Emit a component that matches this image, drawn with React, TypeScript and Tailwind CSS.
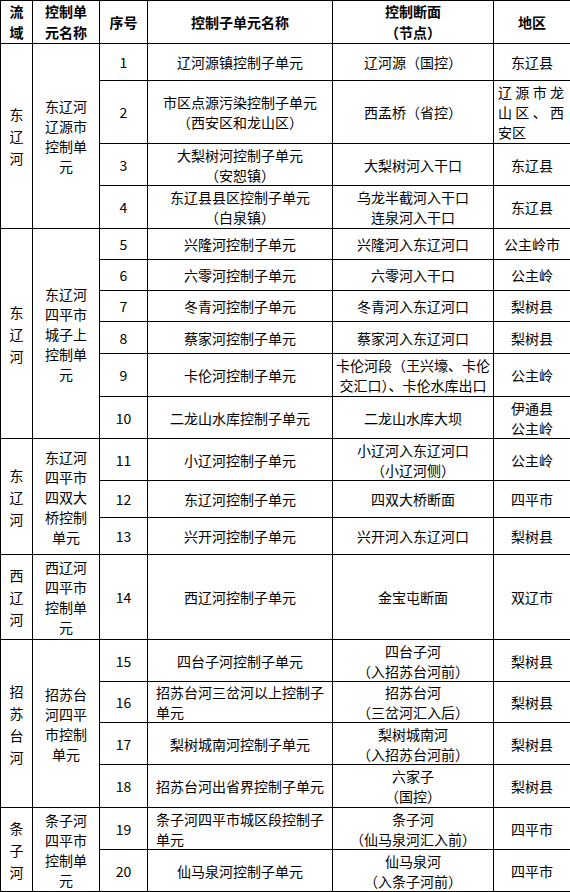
import React from "react";

type Row = {
  no: string;
  h: string;
  name: string[];
  nameLeft?: boolean;
  section: string[];
  area: string[];
  areaJustify?: boolean;
};

type Group = { basin: string; unit: string[]; rows: Row[] };

const GROUPS: Group[] = [
  {
    basin: "东辽河",
    unit: ["东辽河", "辽源市", "控制单", "元"],
    rows: [
      { no: "1", h: "h-[37px]", name: ["辽河源镇控制子单元"], section: ["辽河源（国控）"], area: ["东辽县"] },
      {
        no: "2",
        h: "h-[63px]",
        name: ["市区点源污染控制子单元", "（西安区和龙山区）"],
        section: ["西孟桥（省控）"],
        area: ["辽源市龙山区、西安区"],
        areaJustify: true,
      },
      { no: "3", h: "h-[42px]", name: ["大梨树河控制子单元", "（安恕镇）"], section: ["大梨树河入干口"], area: ["东辽县"] },
      {
        no: "4",
        h: "h-[43px]",
        name: ["东辽县县区控制子单元", "（白泉镇）"],
        section: ["乌龙半截河入干口", "连泉河入干口"],
        area: ["东辽县"],
      },
    ],
  },
  {
    basin: "东辽河",
    unit: ["东辽河", "四平市", "城子上", "控制单", "元"],
    rows: [
      { no: "5", h: "h-[31px]", name: ["兴隆河控制子单元"], section: ["兴隆河入东辽河口"], area: ["公主岭市"] },
      { no: "6", h: "h-[31px]", name: ["六零河控制子单元"], section: ["六零河入干口"], area: ["公主岭"] },
      { no: "7", h: "h-[31px]", name: ["冬青河控制子单元"], section: ["冬青河入东辽河口"], area: ["梨树县"] },
      { no: "8", h: "h-[32px]", name: ["蔡家河控制子单元"], section: ["蔡家河入东辽河口"], area: ["梨树县"] },
      {
        no: "9",
        h: "h-[43px]",
        name: ["卡伦河控制子单元"],
        section: ["卡伦河段（王兴壕、卡伦", "交汇口）、卡伦水库出口"],
        area: ["公主岭"],
      },
      { no: "10", h: "h-[42px]", name: ["二龙山水库控制子单元"], section: ["二龙山水库大坝"], area: ["伊通县", "公主岭"] },
    ],
  },
  {
    basin: "东辽河",
    unit: ["东辽河", "四平市", "四双大", "桥控制", "单元"],
    rows: [
      {
        no: "11",
        h: "h-[42px]",
        name: ["小辽河控制子单元"],
        section: ["小辽河入东辽河口", "（小辽河侧）"],
        area: ["公主岭"],
      },
      { no: "12", h: "h-[37px]", name: ["东辽河控制子单元"], section: ["四双大桥断面"], area: ["四平市"] },
      { no: "13", h: "h-[37px]", name: ["兴开河控制子单元"], section: ["兴开河入东辽河口"], area: ["梨树县"] },
    ],
  },
  {
    basin: "西辽河",
    unit: ["西辽河", "四平市", "控制单", "元"],
    rows: [{ no: "14", h: "h-[85px]", name: ["西辽河控制子单元"], section: ["金宝屯断面"], area: ["双辽市"] }],
  },
  {
    basin: "招苏台河",
    unit: ["招苏台", "河四平", "市控制", "单元"],
    rows: [
      { no: "15", h: "h-[42px]", name: ["四台子河控制子单元"], section: ["四台子河", "（入招苏台河前）"], area: ["梨树县"] },
      {
        no: "16",
        h: "h-[41px]",
        name: ["招苏台河三岔河以上控制子", "单元"],
        nameLeft: true,
        section: ["招苏台河", "（三岔河汇入后）"],
        area: ["梨树县"],
      },
      { no: "17", h: "h-[42px]", name: ["梨树城南河控制子单元"], section: ["梨树城南河", "（入招苏台河前）"], area: ["梨树县"] },
      { no: "18", h: "h-[43px]", name: ["招苏台河出省界控制子单元"], section: ["六家子", "（国控）"], area: ["梨树县"] },
    ],
  },
  {
    basin: "条子河",
    unit: ["条子河", "四平市", "控制单", "元"],
    rows: [
      {
        no: "19",
        h: "h-[42px]",
        name: ["条子河四平市城区段控制子", "单元"],
        nameLeft: true,
        section: ["条子河", "（仙马泉河汇入前）"],
        area: ["四平市"],
      },
      { no: "20", h: "h-[42px]", name: ["仙马泉河控制子单元"], section: ["仙马泉河", "（入条子河前）"], area: ["四平市"] },
    ],
  },
];

function Lines({ lines }: { lines: string[] }) {
  return (
    <>
      {lines.map((l, i) => (
        <div key={i} className="whitespace-nowrap">
          {l}
        </div>
      ))}
    </>
  );
}

const cell = "border border-black align-middle text-center py-0";

export default function App() {
  return (
    <div className="bg-white w-[570px] h-[892px] text-black text-[14px] leading-[20px] [font-family:'Noto_Sans_CJK_SC','Noto_Sans',sans-serif]">
      <table className="table-fixed border-collapse w-[570px]">
        <colgroup>
          <col className="w-[32px]" />
          <col className="w-[67px]" />
          <col className="w-[48px]" />
          <col className="w-[185px]" />
          <col className="w-[161px]" />
          <col className="w-[77px]" />
        </colgroup>
        <thead>
          <tr className="h-[43px] font-bold leading-[21px]">
            <th className={cell}>
              <Lines lines={["流", "域"]} />
            </th>
            <th className={cell}>
              <Lines lines={["控制单", "元名称"]} />
            </th>
            <th className={cell}>序号</th>
            <th className={cell}>控制子单元名称</th>
            <th className={cell}>
              <Lines lines={["控制断面", "（节点）"]} />
            </th>
            <th className={cell}>地区</th>
          </tr>
        </thead>
        <tbody>
          {GROUPS.map((g, gi) =>
            g.rows.map((r, ri) => (
              <tr key={`${gi}-${ri}`} className={r.h}>
                {ri === 0 && (
                  <td rowSpan={g.rows.length} className={`${cell} leading-[22px]`}>
                    <Lines lines={g.basin.split("")} />
                  </td>
                )}
                {ri === 0 && (
                  <td rowSpan={g.rows.length} className={cell}>
                    <Lines lines={g.unit} />
                  </td>
                )}
                <td className={cell}>{r.no}</td>
                <td className={`${cell} ${r.nameLeft ? "!text-left px-2" : ""}`}>
                  <Lines lines={r.name} />
                </td>
                <td className={`${cell} px-0`}>
                  <Lines lines={r.section} />
                </td>
                <td className={`${cell} ${r.areaJustify ? "!text-justify pl-1 pr-1.5" : ""}`}>
                  {r.areaJustify ? r.area.join("") : <Lines lines={r.area} />}
                </td>
              </tr>
            ))
          )}
        </tbody>
      </table>
    </div>
  );
}
